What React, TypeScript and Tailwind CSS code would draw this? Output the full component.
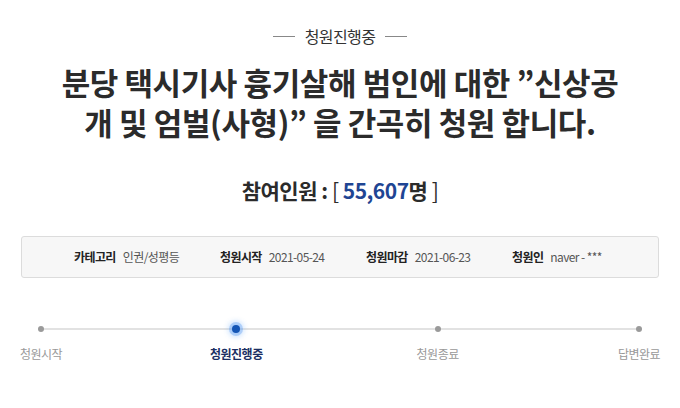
import React from 'react';

const font = { fontFamily: '"Noto Sans CJK KR", "Noto Sans", sans-serif' };

const infoItems = [
  { label: '카테고리', value: '인권/성평등' },
  { label: '청원시작', value: '2021-05-24' },
  { label: '청원마감', value: '2021-06-23' },
  { label: '청원인', value: 'naver - ***' },
];

const steps = [
  { label: '청원시작', active: false },
  { label: '청원진행중', active: true },
  { label: '청원종료', active: false },
  { label: '답변완료', active: false },
];

export default function App() {
  return (
    <div className="w-[680px] h-[408px] bg-white overflow-hidden" style={font}>
      <div className="pt-[26px] flex items-center justify-center gap-[10px]">
        <span className="w-[22px] h-px bg-[#888]" />
        <span className="text-[16px] leading-[20px] text-[#333] tracking-[-0.6px]">청원진행중</span>
        <span className="w-[22px] h-px bg-[#888]" />
      </div>

      <h1 className="mt-[16px] text-center text-[31px] leading-[40px] font-bold text-[#2b2b2b] tracking-[-0.4px]">
        분당 택시기사 흉기살해 범인에 대한 ”신상공
        <br />
        개 및 엄벌(사형)” 을 간곡히 청원 합니다.
      </h1>

      <div className="mt-[33px] text-center text-[21px] leading-[30px] font-bold text-[#2b2b2b] tracking-[-0.5px]">
        참여인원 : <span className="font-normal">[</span>{' '}
        <span className="text-[#1f4593]">55,607</span>명{' '}
        <span className="font-normal">]</span>
      </div>

      <div className="mx-[21px] mt-[31px] h-[42px] rounded-[3px] border border-[#dcdcdc] bg-[#f7f7f7] flex items-center pl-[52px]">
        {infoItems.map((item) => (
          <div key={item.label} className="w-[146px] flex items-center gap-[7px] text-[12px] tracking-[-0.6px]">
            <span className="font-bold text-[#222]">{item.label}</span>
            <span className="text-[#555]">{item.value}</span>
          </div>
        ))}
      </div>

      <div className="relative mt-[46px] mx-[20px]">
        <div className="absolute left-[21px] right-[24px] top-[4px] h-[2px] bg-[#e2e2e2]" />
        <div className="relative flex justify-between">
          {steps.map((s, i) => (
            <div key={s.label} className={i === 1 ? 'flex flex-col items-center w-[42px] -ml-[6px]' : 'flex flex-col items-center w-[42px]'}>
              <div className="h-[10px] flex items-center justify-center">
                {s.active ? (
                  <span className="w-[8px] h-[8px] rounded-full bg-[#1556b5] shadow-[0_0_0_3px_rgba(80,150,240,0.35),0_0_4px_5px_rgba(120,180,250,0.25)]" />
                ) : (
                  <span className="w-[6px] h-[6px] rounded-full bg-[#9a9a9a]" />
                )}
              </div>
              <span
                className={
                  s.active
                    ? 'mt-[11px] whitespace-nowrap text-[12px] font-bold text-[#1b2f63] tracking-[-0.5px]'
                    : 'mt-[11px] whitespace-nowrap text-[12px] text-[#999] tracking-[-0.5px]'
                }
              >
                {s.label}
              </span>
            </div>
          ))}
        </div>
      </div>
    </div>
  );
}
